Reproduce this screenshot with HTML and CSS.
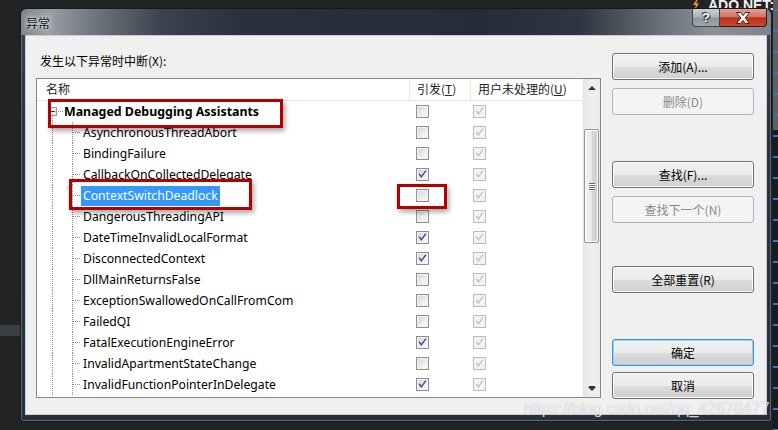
FILE: index.html
```html
<!DOCTYPE html>
<html lang="zh-CN">
<head>
    <meta charset="UTF-8">
    <title>异常</title>
    <link rel="stylesheet" href="styles.css">
</head>
<body>
    <div class="desk-ado">
        <svg class="bolt" viewBox="0 0 8 12" width="8" height="12"><path d="M5 0 L1 6 L4 6 L2 12 L7 4.5 L4.2 4.5 L6 0 Z"/></svg>
        ADO.NET:
    </div>
    <div class="desk-band"></div>
    <div class="desk-strip"></div>

    <div class="window">
        <div class="titlebar">
            <span class="title">异常</span>
            <div class="caption-btns">
                <div class="cap-help">?</div>
                <div class="cap-close">
                    <svg viewBox="0 0 16 12" width="16" height="12"><path d="M1.5 0.5 H5.5 L8 3.6 L10.5 0.5 H14.5 L10.2 6 L14.5 11.5 H10.5 L8 8.4 L5.5 11.5 H1.5 L5.8 6 Z"/></svg>
                </div>
            </div>
        </div>

        <div class="client">
            <div class="main">
                <div class="caption-label">发生以下异常时中断(X):</div>
                <div class="listbox">
                    <div class="list-inner">
                        <div class="list-header">
                            <div class="hcol">名称</div>
                            <div class="hcol">引发(<u>T</u>)</div>
                            <div class="hcol">用户未处理的(<u>U</u>)</div>
                        </div>

                        <div class="row root">
                            <div class="name"><span class="exp"></span><span class="label bold">Managed Debugging Assistants</span></div>
                            <div class="c1"><span class="cb"></span></div>
                            <div class="c2"><span class="cb dis"><svg viewBox="0 0 11 11"><path d="M1.5 5 L3 4.4 L4.3 6.7 L8.4 1.2 L9.5 2 L4.3 9 Z"/></svg></span></div>
                        </div>
                        <div class="row child">
                            <div class="name"><span class="label">AsynchronousThreadAbort</span></div>
                            <div class="c1"><span class="cb"></span></div>
                            <div class="c2"><span class="cb dis"><svg viewBox="0 0 11 11"><path d="M1.5 5 L3 4.4 L4.3 6.7 L8.4 1.2 L9.5 2 L4.3 9 Z"/></svg></span></div>
                        </div>
                        <div class="row child">
                            <div class="name"><span class="label">BindingFailure</span></div>
                            <div class="c1"><span class="cb"></span></div>
                            <div class="c2"><span class="cb dis"><svg viewBox="0 0 11 11"><path d="M1.5 5 L3 4.4 L4.3 6.7 L8.4 1.2 L9.5 2 L4.3 9 Z"/></svg></span></div>
                        </div>
                        <div class="row child">
                            <div class="name"><span class="label">CallbackOnCollectedDelegate</span></div>
                            <div class="c1"><span class="cb"><svg viewBox="0 0 11 11"><path d="M1.5 5 L3 4.4 L4.3 6.7 L8.4 1.2 L9.5 2 L4.3 9 Z"/></svg></span></div>
                            <div class="c2"><span class="cb dis"><svg viewBox="0 0 11 11"><path d="M1.5 5 L3 4.4 L4.3 6.7 L8.4 1.2 L9.5 2 L4.3 9 Z"/></svg></span></div>
                        </div>
                        <div class="row child">
                            <div class="name"><span class="label selected">ContextSwitchDeadlock</span></div>
                            <div class="c1"><span class="cb"></span></div>
                            <div class="c2"><span class="cb dis"><svg viewBox="0 0 11 11"><path d="M1.5 5 L3 4.4 L4.3 6.7 L8.4 1.2 L9.5 2 L4.3 9 Z"/></svg></span></div>
                        </div>
                        <div class="row child">
                            <div class="name"><span class="label">DangerousThreadingAPI</span></div>
                            <div class="c1"><span class="cb"></span></div>
                            <div class="c2"><span class="cb dis"><svg viewBox="0 0 11 11"><path d="M1.5 5 L3 4.4 L4.3 6.7 L8.4 1.2 L9.5 2 L4.3 9 Z"/></svg></span></div>
                        </div>
                        <div class="row child">
                            <div class="name"><span class="label">DateTimeInvalidLocalFormat</span></div>
                            <div class="c1"><span class="cb"><svg viewBox="0 0 11 11"><path d="M1.5 5 L3 4.4 L4.3 6.7 L8.4 1.2 L9.5 2 L4.3 9 Z"/></svg></span></div>
                            <div class="c2"><span class="cb dis"><svg viewBox="0 0 11 11"><path d="M1.5 5 L3 4.4 L4.3 6.7 L8.4 1.2 L9.5 2 L4.3 9 Z"/></svg></span></div>
                        </div>
                        <div class="row child">
                            <div class="name"><span class="label">DisconnectedContext</span></div>
                            <div class="c1"><span class="cb"><svg viewBox="0 0 11 11"><path d="M1.5 5 L3 4.4 L4.3 6.7 L8.4 1.2 L9.5 2 L4.3 9 Z"/></svg></span></div>
                            <div class="c2"><span class="cb dis"><svg viewBox="0 0 11 11"><path d="M1.5 5 L3 4.4 L4.3 6.7 L8.4 1.2 L9.5 2 L4.3 9 Z"/></svg></span></div>
                        </div>
                        <div class="row child">
                            <div class="name"><span class="label">DllMainReturnsFalse</span></div>
                            <div class="c1"><span class="cb"></span></div>
                            <div class="c2"><span class="cb dis"><svg viewBox="0 0 11 11"><path d="M1.5 5 L3 4.4 L4.3 6.7 L8.4 1.2 L9.5 2 L4.3 9 Z"/></svg></span></div>
                        </div>
                        <div class="row child">
                            <div class="name"><span class="label">ExceptionSwallowedOnCallFromCom</span></div>
                            <div class="c1"><span class="cb"></span></div>
                            <div class="c2"><span class="cb dis"><svg viewBox="0 0 11 11"><path d="M1.5 5 L3 4.4 L4.3 6.7 L8.4 1.2 L9.5 2 L4.3 9 Z"/></svg></span></div>
                        </div>
                        <div class="row child">
                            <div class="name"><span class="label">FailedQI</span></div>
                            <div class="c1"><span class="cb"></span></div>
                            <div class="c2"><span class="cb dis"><svg viewBox="0 0 11 11"><path d="M1.5 5 L3 4.4 L4.3 6.7 L8.4 1.2 L9.5 2 L4.3 9 Z"/></svg></span></div>
                        </div>
                        <div class="row child">
                            <div class="name"><span class="label">FatalExecutionEngineError</span></div>
                            <div class="c1"><span class="cb"><svg viewBox="0 0 11 11"><path d="M1.5 5 L3 4.4 L4.3 6.7 L8.4 1.2 L9.5 2 L4.3 9 Z"/></svg></span></div>
                            <div class="c2"><span class="cb dis"><svg viewBox="0 0 11 11"><path d="M1.5 5 L3 4.4 L4.3 6.7 L8.4 1.2 L9.5 2 L4.3 9 Z"/></svg></span></div>
                        </div>
                        <div class="row child">
                            <div class="name"><span class="label">InvalidApartmentStateChange</span></div>
                            <div class="c1"><span class="cb"></span></div>
                            <div class="c2"><span class="cb dis"><svg viewBox="0 0 11 11"><path d="M1.5 5 L3 4.4 L4.3 6.7 L8.4 1.2 L9.5 2 L4.3 9 Z"/></svg></span></div>
                        </div>
                        <div class="row child">
                            <div class="name"><span class="label">InvalidFunctionPointerInDelegate</span></div>
                            <div class="c1"><span class="cb"><svg viewBox="0 0 11 11"><path d="M1.5 5 L3 4.4 L4.3 6.7 L8.4 1.2 L9.5 2 L4.3 9 Z"/></svg></span></div>
                            <div class="c2"><span class="cb dis"><svg viewBox="0 0 11 11"><path d="M1.5 5 L3 4.4 L4.3 6.7 L8.4 1.2 L9.5 2 L4.3 9 Z"/></svg></span></div>
                        </div>
                    </div>

                    <div class="vscroll">
                        <div class="sb-btn"><span class="arrow-up"></span></div>
                        <div class="sb-track"><div class="sb-thumb"></div></div>
                        <div class="sb-btn"><span class="arrow-down"></span></div>
                    </div>

                    <div class="mark mark-mda"></div>
                    <div class="mark mark-ctx"></div>
                    <div class="mark mark-chk"></div>
                </div>
            </div>

            <div class="side">
                <div class="btn">添加(A)...</div>
                <div class="btn disabled gap-s">删除(D)</div>
                <div class="btn gap-l">查找(F)...</div>
                <div class="btn disabled gap-s">查找下一个(N)</div>
                <div class="btn gap-m">全部重置(R)</div>
                <div class="btn default gap-l">确定</div>
                <div class="btn gap-xs">取消</div>
            </div>
        </div>
    </div>

    <div class="watermark">https://blog.csdn.net/qq_42678477</div>
</body>
</html>
```

FILE: styles.css
```css
body {
    margin: 0;
    width: 778px;
    height: 430px;
    overflow: hidden;
    position: relative;
    background: #222324;
    font-family: "Noto Sans", "Noto Sans CJK SC", sans-serif;
    font-size: 12px;
    color: #000;
}

/* bits of the IDE behind the dialog */
.desk-ado {
    position: absolute;
    top: -2px;
    left: 692px;
    color: #f2f2f2;
    font-family: "Liberation Sans", sans-serif;
    font-weight: bold;
    font-size: 14px;
    line-height: 14px;
    display: flex;
    align-items: center;
    gap: 8px;
}
.bolt {
    fill: #e8a020;
}
.desk-band {
    position: absolute;
    left: 0;
    top: 325px;
    width: 20px;
    height: 11px;
    background: #3b3e43;
}
.desk-strip {
    position: absolute;
    left: 773px;
    top: 0;
    width: 5px;
    height: 430px;
    background:
        repeating-linear-gradient(to bottom, transparent 0 9px, #4d6f99 9px 11px, transparent 11px 21px),
        linear-gradient(to bottom, #5c6168 0, #5c6168 130px, #151c27 130px);
}

.window {
    position: relative;
    z-index: 1;
    margin: 8px 0 0 20px;
    width: 752px;
    height: 414px;
    box-sizing: border-box;
    border: 1px solid #15191f;
    border-radius: 7px 7px 3px 3px;
    background: linear-gradient(to bottom, #3a4350 0, #29323e 120px, #27303c);
    box-shadow: inset 0 0 0 1px rgba(200, 210, 220, 0.35);
    display: flex;
    flex-direction: column;
}
.titlebar {
    height: 26px;
    display: flex;
    align-items: flex-start;
    border-radius: 6px 6px 0 0;
    background: linear-gradient(to right, #80868d 0, #9a9fa5 28px, #727880 70px, #3c434e 140px, #2a313d 220px, #252c38 460px, #2f3641 560px, #6a7078 640px, #8b9197 690px, #7d838a 752px);
}
.title {
    margin: 6px 0 0 5px;
    font-family: "Noto Sans CJK SC", sans-serif;
    font-size: 12px;
    line-height: 16px;
    color: #111;
    text-shadow: 0 0 6px #fff, 0 0 3px #e8ecef;
}
.caption-btns {
    margin-left: auto;
    margin-right: 4px;
    display: flex;
}
.cap-help {
    width: 28px;
    height: 18px;
    box-sizing: border-box;
    border: 1px solid #3f444a;
    border-top: none;
    border-radius: 0 0 0 4px;
    background: linear-gradient(to bottom, #c9cdd2 0, #aeb3b9 48%, #8f959c 52%, #9fa5ab 100%);
    color: #fff;
    font-family: "Liberation Sans", sans-serif;
    font-weight: bold;
    font-size: 13px;
    line-height: 17px;
    text-align: center;
    text-shadow: 0 0 1px #222, 1px 1px 1px #333, -1px -1px 1px #333;
}
.cap-close {
    width: 47px;
    height: 18px;
    box-sizing: border-box;
    border: 1px solid #3a1611;
    border-top: none;
    border-left: none;
    border-radius: 0 0 4px 0;
    background: linear-gradient(to bottom, #e3a394 0, #d27563 45%, #b8321b 52%, #c9492f 100%);
    display: flex;
    align-items: center;
    justify-content: center;
}
.cap-close svg {
    fill: #fff;
    stroke: #4a1c14;
    stroke-width: 1;
}

.client {
    flex: 1;
    margin: 0 4px 6px 4px;
    border: 1px solid #c8ced5;
    background: #f0f0f0;
    display: flex;
    padding: 17px 0 0 10px;
}
.main {
    width: 565px;
    display: flex;
    flex-direction: column;
}
.caption-label {
    height: 16px;
    line-height: 16px;
    padding-left: 4px;
    font-family: "Noto Sans CJK SC", sans-serif;
    margin-bottom: 9px;
}
.listbox {
    position: relative;
    height: 320px;
    box-sizing: border-box;
    border: 1px solid #828790;
    background: #fff;
    display: flex;
    overflow: hidden;
}
.list-inner {
    width: 546px;
}
.list-header {
    display: grid;
    grid-template-columns: 373px 61px 1fr;
    height: 22px;
    box-sizing: border-box;
    border-bottom: 1px solid #e5e5e5;
    font-family: "Noto Sans CJK SC", sans-serif;
}
.hcol {
    line-height: 20px;
    padding-left: 7px;
    border-right: 1px solid #e5e5e5;
    color: #222;
}
.hcol:first-child {
    padding-left: 9px;
}
.hcol:last-child {
    border-right: none;
}
.hcol u {
    text-underline-offset: 1px;
}

.row {
    display: grid;
    grid-template-columns: 373px 61px 1fr;
    height: 21px;
    align-items: center;
}
.name {
    height: 21px;
    display: flex;
    align-items: center;
    background-repeat: no-repeat;
}
.row.child .name {
    padding-left: 44px;
    background-image:
        repeating-linear-gradient(to bottom, #8c8c8c 0 1px, transparent 1px 2px),
        repeating-linear-gradient(to bottom, #8c8c8c 0 1px, transparent 1px 2px),
        repeating-linear-gradient(to right, #8c8c8c 0 1px, transparent 1px 2px);
    background-size: 1px 100%, 1px 100%, 8px 1px;
    background-position: 15px 0, 35px 0, 36px 10px;
}
.row.root .name {
    background-image:
        repeating-linear-gradient(to bottom, #8c8c8c 0 1px, transparent 1px 2px),
        repeating-linear-gradient(to right, #8c8c8c 0 1px, transparent 1px 2px);
    background-size: 1px 6px, 5px 1px;
    background-position: 15px 15px, 21px 10px;
}
.exp {
    position: relative;
    margin-left: 11px;
    width: 9px;
    height: 9px;
    box-sizing: border-box;
    border: 1px solid #979797;
    background: linear-gradient(135deg, #fff, #e4e4e4);
}
.exp::after {
    content: "";
    position: absolute;
    left: 1px;
    top: 3px;
    width: 5px;
    height: 1px;
    background: #333;
}
.row.root .label {
    margin-left: 5px;
}
.label {
    padding: 0 2px;
    font-size: 12.2px;
    line-height: 20px;
    white-space: nowrap;
}
.bold {
    font-weight: bold;
    font-size: 12.4px;
}
.selected {
    background: #3399ff;
    color: #fff;
}

.c1 {
    padding-left: 6px;
    display: flex;
}
.c2 {
    padding-left: 2px;
    display: flex;
}
.cb {
    width: 13px;
    height: 13px;
    box-sizing: border-box;
    border: 1px solid #8e8f8f;
    background: linear-gradient(135deg, #d4d4d4 0, #eeeeee 60%, #fafafa 100%);
    box-shadow: inset 0 0 0 1px #f4f4f4;
    display: flex;
}
.cb svg {
    width: 11px;
    height: 11px;
    fill: #2f4a9c;
}
.cb.dis {
    border-color: #bcbcbc;
    background: #f4f4f4;
    box-shadow: none;
}
.cb.dis svg {
    fill: #c2c2c2;
}

.vscroll {
    width: 17px;
    display: flex;
    flex-direction: column;
    background: linear-gradient(to right, #e6e6e6, #f0f0f0 60%, #ebebeb);
    border-left: 1px solid #f2f2f2;
}
.sb-btn {
    height: 17px;
    display: flex;
    align-items: center;
    justify-content: center;
}
.arrow-up {
    border-left: 4px solid transparent;
    border-right: 4px solid transparent;
    border-bottom: 4px solid #333;
}
.arrow-down {
    border-left: 4px solid transparent;
    border-right: 4px solid transparent;
    border-top: 4px solid #333;
    box-shadow: 0 -2px 0 -1px #333;
}
.sb-track {
    flex: 1;
    padding-top: 33px;
}
.sb-thumb {
    position: relative;
    margin-left: 1px;
    width: 15px;
    height: 114px;
    box-sizing: border-box;
    border: 1px solid #959595;
    border-radius: 2px;
    background: linear-gradient(to right, #f4f4f4, #e8e8e8 50%, #d6d6d6 51%, #d0d0d0);
    box-shadow: inset 0 0 0 1px #fbfbfb;
}
.sb-thumb::after {
    content: "";
    position: absolute;
    left: 4px;
    top: 53px;
    width: 6px;
    height: 7px;
    background: repeating-linear-gradient(to bottom, #6a6a6a 0 1px, #fff 1px 2px);
}

.mark {
    position: absolute;
    box-sizing: border-box;
    border: 3px solid #b30000;
    box-shadow: 2px 3px 5px rgba(0, 0, 0, 0.35);
}
.mark-mda {
    left: 11px;
    top: 20px;
    width: 235px;
    height: 29px;
}
.mark-ctx {
    left: 32px;
    top: 100px;
    width: 183px;
    height: 31px;
}
.mark-chk {
    left: 360px;
    top: 105px;
    width: 50px;
    height: 25px;
}

.side {
    margin-left: 11px;
    width: 142px;
    display: flex;
    flex-direction: column;
}
.btn {
    height: 27px;
    box-sizing: border-box;
    border: 1px solid #707070;
    border-radius: 3px;
    background: linear-gradient(to bottom, #f2f2f2 0, #ebebeb 50%, #dddddd 51%, #cfcfcf 100%);
    box-shadow: inset 0 0 0 1px #fbfbfb;
    font-family: "Noto Sans CJK SC", sans-serif;
    display: flex;
    align-items: center;
    justify-content: center;
}
.btn.disabled {
    border-color: #adb2b5;
    background: #f4f4f4;
    box-shadow: none;
    color: #8a8a8a;
}
.btn.default {
    border-color: #3c8fd0;
    box-shadow: inset 0 0 0 1px #93d8f8;
}
.gap-xs { margin-top: 6px; }
.gap-s { margin-top: 8px; }
.gap-m { margin-top: 43px; }
.gap-l { margin-top: 46px; }

.watermark {
    position: absolute;
    z-index: 2;
    left: 524px;
    top: 400px;
    font-family: "Liberation Sans", sans-serif;
    font-size: 16px;
    color: rgba(255, 255, 255, 0.8);
    text-shadow: 0 0 1px rgba(0, 0, 0, 0.3);
}
```
